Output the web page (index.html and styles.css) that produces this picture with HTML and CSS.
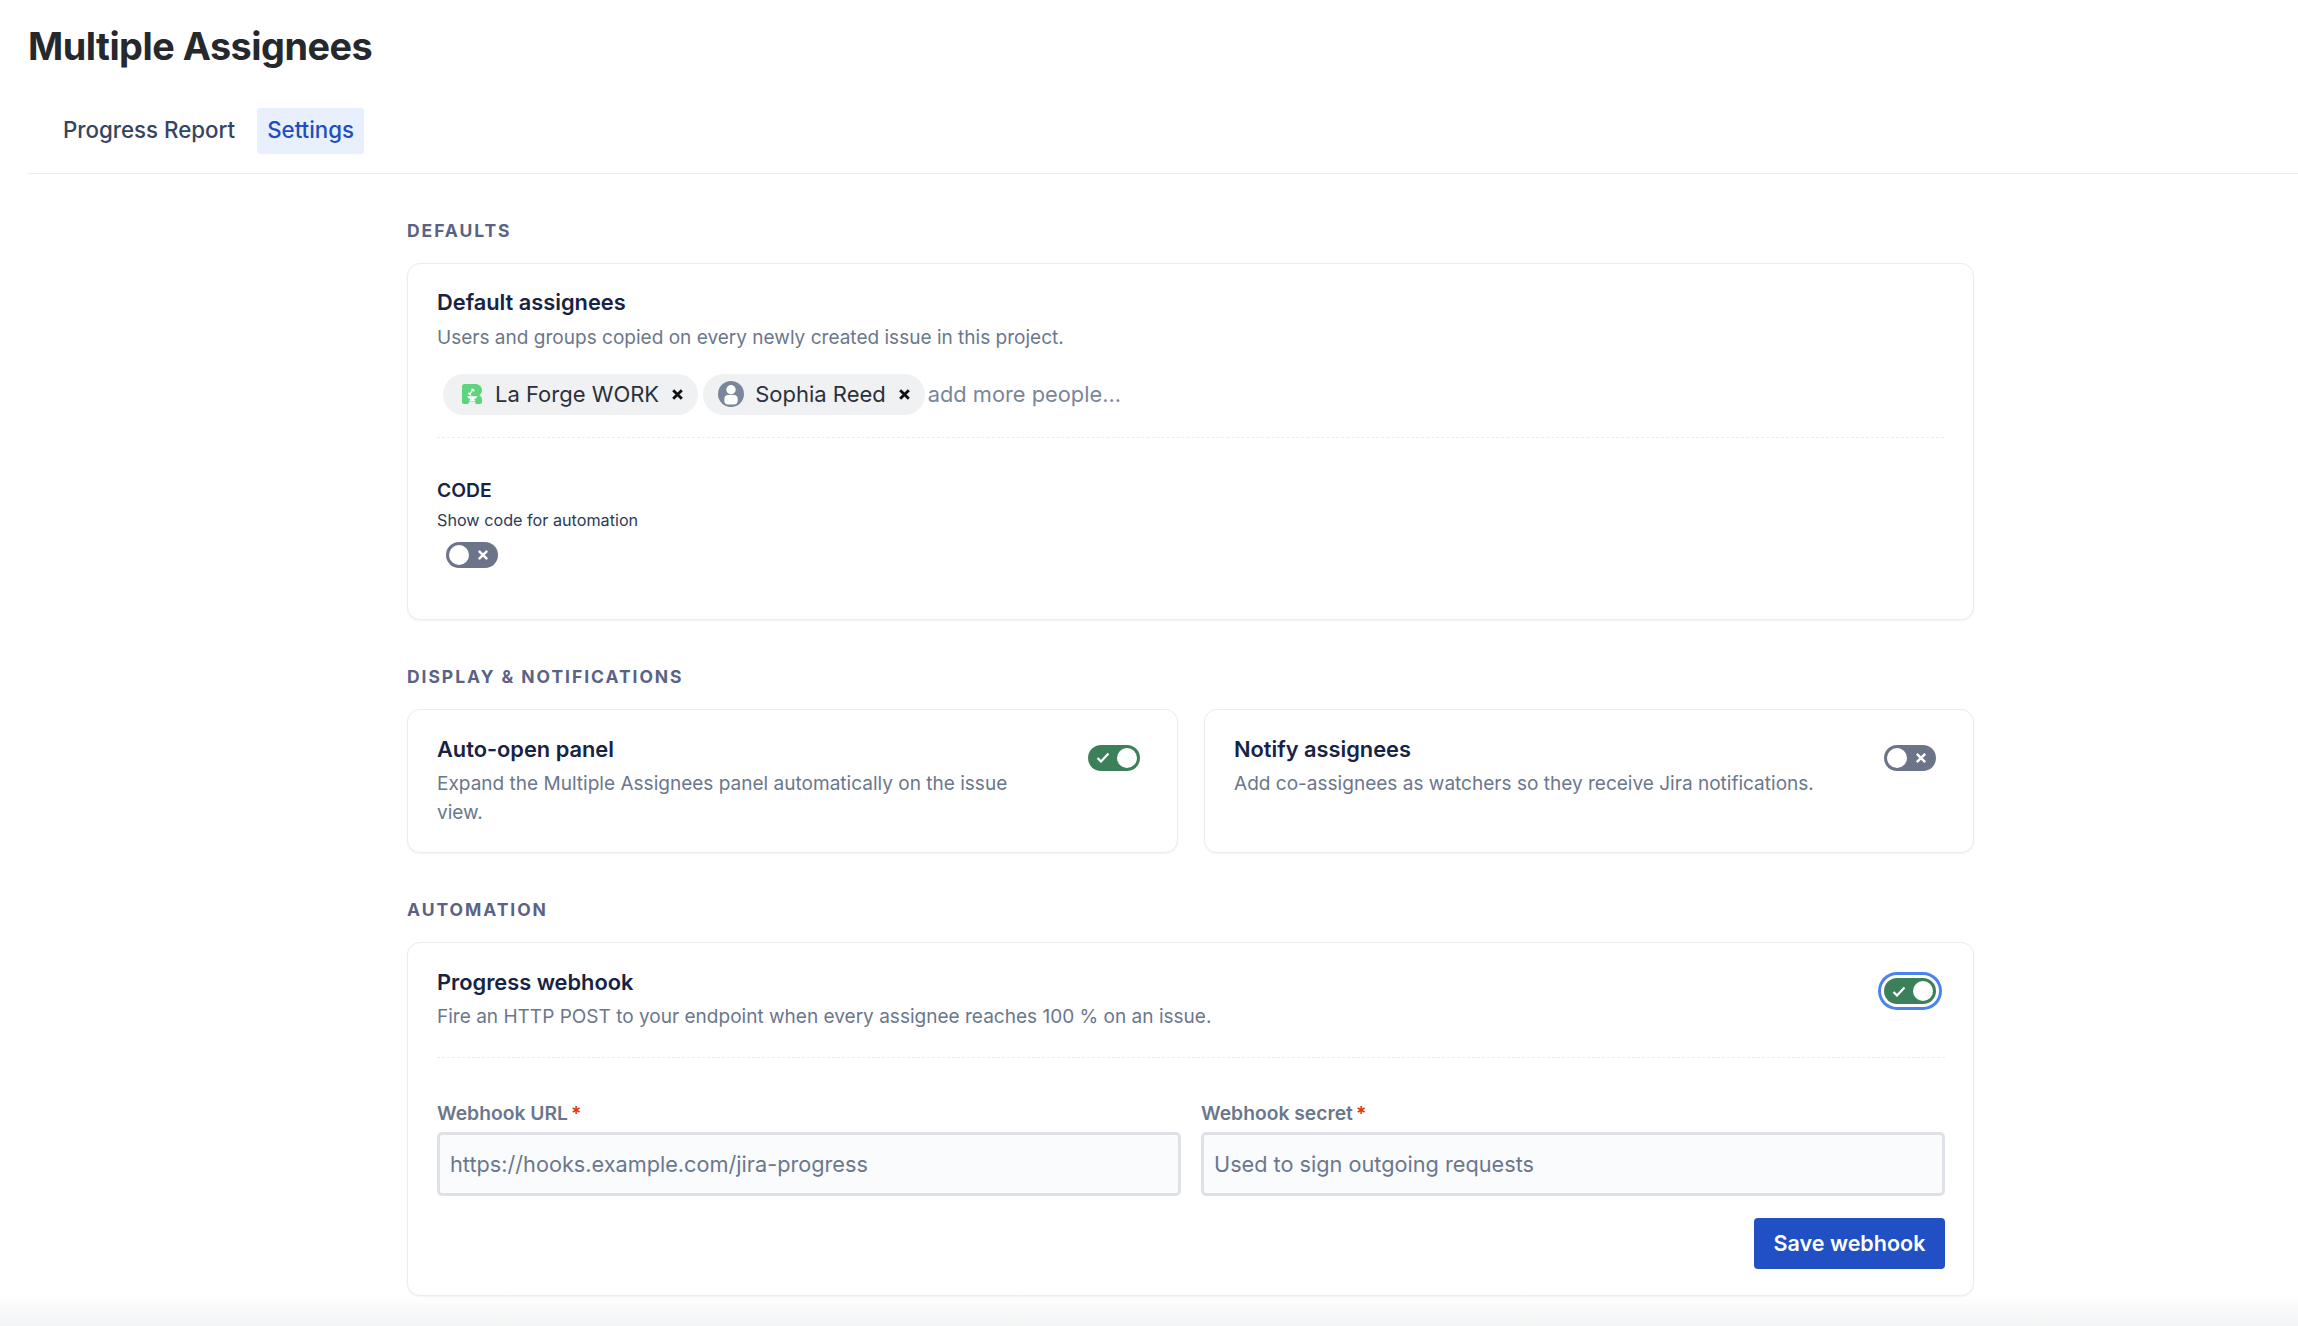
FILE: index.html
```html
<!DOCTYPE html>
<html lang="en">
<head>
<meta charset="utf-8">
<title>Multiple Assignees</title>
<link rel="stylesheet" href="styles.css">
</head>
<body>
<header class="page-head">
  <h1 class="page-title">Multiple Assignees</h1>
  <nav class="tabs">
    <a class="tab">Progress Report</a>
    <a class="tab tab-active">Settings</a>
  </nav>
</header>
<main class="content">
  <section class="section">
    <h2 class="section-label">DEFAULTS</h2>
    <div class="card card-defaults">
      <h3 class="card-title">Default assignees</h3>
      <p class="card-desc">Users and groups copied on every newly created issue in this project.</p>
      <div class="picker">
        <span class="chip chip-group">
          <svg class="chip-logo" viewBox="0 0 20 20"><path fill="#5fd47c" d="M2.500 0H13c4 0 7 2.500 7 6.300 0 2.300-1.100 4-2.700 5 1.700 1 2.700 2.600 2.700 4.500V18a2 2 0 0 1-2 2h-4l-1.500-2.500h-5L6 20H2a2 2 0 0 1-2-2V2.500A2.500 2.500 0 0 1 2.500 0z"/><path fill="#fff" d="M10.300 4.200l2.500 2-1.300 1.500-.8-.6-2.200 2.800 1 .8-1 1.100-2.800-2.300 1-1.100.8.600 2.200-2.800-.7-.6z"/><path fill="#fff" d="M5.200 12.300h10.300c-.5 1.500-1.700 2.500-3.300 2.700l1.200 2.300H7.200L8.400 15c-1.700-.2-2.800-1.200-3.200-2.700z"/></svg>
          La Forge WORK
          <svg class="chip-x" viewBox="0 0 12 12"><path d="M2 2l8 8M10 2l-8 8"/></svg>
        </span>
        <span class="chip chip-user">
          <svg class="chip-avatar" viewBox="0 0 26 26"><circle cx="13" cy="13" r="13" fill="#7a869a"/><circle cx="13" cy="8.800" r="4.700" fill="#fff"/><rect x="6.300" y="14" width="13.400" height="9.600" rx="4" fill="#fff"/></svg>
          Sophia Reed
          <svg class="chip-x" viewBox="0 0 12 12"><path d="M2 2l8 8M10 2l-8 8"/></svg>
        </span>
        <span class="picker-placeholder">add more people...</span>
      </div>
      <hr class="dashed picker-rule">
      <h4 class="field-head">CODE</h4>
      <p class="field-note">Show code for automation</p>
      <span class="toggle toggle-off toggle-block">
        <span class="knob"></span>
        <svg class="toggle-x" viewBox="0 0 10 10"><path d="M1.500 1.500l7 7M8.500 1.500l-7 7"/></svg>
      </span>
    </div>
  </section>

  <section class="section">
    <h2 class="section-label">DISPLAY &amp; NOTIFICATIONS</h2>
    <div class="card-pair">
      <div class="card card-setting">
        <div class="setting-copy">
          <h3 class="card-title">Auto-open panel</h3>
          <p class="card-desc">Expand the Multiple Assignees panel automatically on the issue view.</p>
        </div>
        <span class="toggle toggle-on">
          <svg class="toggle-check" viewBox="0 0 14 11"><path d="M1.500 6l3.500 3.500L12.500 1.500"/></svg>
          <span class="knob"></span>
        </span>
      </div>
      <div class="card card-setting">
        <div class="setting-copy">
          <h3 class="card-title">Notify assignees</h3>
          <p class="card-desc">Add co-assignees as watchers so they receive Jira notifications.</p>
        </div>
        <span class="toggle toggle-off">
          <span class="knob"></span>
          <svg class="toggle-x" viewBox="0 0 10 10"><path d="M1.500 1.500l7 7M8.500 1.500l-7 7"/></svg>
        </span>
      </div>
    </div>
  </section>

  <section class="section">
    <h2 class="section-label">AUTOMATION</h2>
    <div class="card card-webhook">
      <div class="webhook-head">
        <div class="setting-copy">
          <h3 class="card-title">Progress webhook</h3>
          <p class="card-desc">Fire an HTTP POST to your endpoint when every assignee reaches 100 % on an issue.</p>
        </div>
        <span class="toggle toggle-on toggle-focus">
          <svg class="toggle-check" viewBox="0 0 14 11"><path d="M1.500 6l3.500 3.500L12.500 1.500"/></svg>
          <span class="knob"></span>
        </span>
      </div>
      <hr class="dashed webhook-rule">
      <div class="fields">
        <label class="field">
          <span class="field-label">Webhook URL<span class="req">*</span></span>
          <input class="input" type="text" placeholder="https://hooks.example.com/jira-progress">
        </label>
        <label class="field">
          <span class="field-label">Webhook secret<span class="req">*</span></span>
          <input class="input" type="text" placeholder="Used to sign outgoing requests">
        </label>
      </div>
      <div class="actions">
        <button class="btn-primary" type="button">Save webhook</button>
      </div>
    </div>
  </section>
</main>
</body>
</html>
```
FILE: styles.css
```css
* { box-sizing: border-box; }
html, body { margin: 0; height: 100%; }
body {
  font-family: Inter, "Noto Sans", sans-serif;
  background: #fff;
  color: #172b4d;
  overflow: hidden;
  position: relative;
  height: 1326px;
}
body::after {
  content: "";
  position: absolute;
  left: 0; right: 0; bottom: 0;
  height: 32px;
  background: linear-gradient(to bottom, rgba(244,245,246,0), #f3f4f5);
  pointer-events: none;
}
.page-head {
  margin-left: 28px;
  height: 174px;
  padding-top: 24px;
  border-bottom: 1.500px solid #ebecf0;
}
.page-title {
  margin: 0;
  font-size: 37.800px;
  line-height: 44px;
  font-weight: 700;
  color: #25282d;
  letter-spacing: -0.500px;
}
.tabs {
  display: flex;
  gap: 12px;
  margin: 40px 0 0 25px;
}
.tab {
  height: 46px;
  padding: 0 10px 4px;
  display: flex;
  align-items: center;
  font-size: 22.300px;
  font-weight: 500;
  color: #344563;
  border-radius: 3px;
}
.tab-active { background: #e9f0fd; color: #1f4ec0; }

.content { margin-left: 407px; width: 1567px; }
.section-label {
  margin: 0 0 20px;
  font-size: 17.500px;
  line-height: 24px;
  font-weight: 700;
  letter-spacing: 1.950px;
  color: #5a6385;
}
.section:first-child { padding-top: 45px; }
.section + .section { margin-top: 45px; }

.card {
  background: #fff;
  border: 1.500px solid #ebecf0;
  border-radius: 13px;
  box-shadow: 0 1px 2px rgba(9,30,66,.06);
}
.card-title {
  margin: 0;
  font-size: 21.800px;
  line-height: 29px;
  font-weight: 600;
  color: #172344;
}
.card-desc {
  margin: 5px 0 0;
  font-size: 19.050px;
  line-height: 29px;
  color: #6b778c;
}

.card-defaults { height: 357px; padding: 24px 29px 0; }
.card-defaults .card-desc { margin-top: 5.500px; }
.picker { display: flex; align-items: center; gap: 5px; margin: 22px 0 0 6px; }
.chip {
  height: 41px;
  display: inline-flex;
  align-items: center;
  border-radius: 21px;
  background: #f0f1f3;
  font-size: 22px;
  color: #2c3038;
}
.chip-group { padding: 0 14px 0 19px; }
.chip-user { padding: 0 14px 0 15px; }
.chip-logo { width: 20px; height: 20px; margin-right: 13px; }
.chip-avatar { width: 26px; height: 26px; margin-right: 11px; }
.chip-x { width: 13px; height: 13px; margin-left: 12px; }
.chip-x path { stroke: #111; stroke-width: 2.600; fill: none; }
.picker-placeholder { font-size: 21.800px; color: #7a869a; margin-left: -2px; }

.dashed { border: 0; border-top: 1.500px dashed #ebecf0; margin: 0; }
.picker-rule { margin-top: 22px; }
.field-head {
  margin: 40.500px 0 0;
  font-size: 19.300px;
  line-height: 24px;
  font-weight: 600;
  color: #172344;
}
.field-note {
  margin: 6px 0 0;
  font-size: 16.200px;
  line-height: 24px;
  color: #2d3a56;
}

.toggle {
  width: 52px;
  height: 26px;
  border-radius: 13px;
  display: inline-flex;
  align-items: center;
  justify-content: space-between;
  flex: none;
  padding: 0 3px;
}
.toggle-block { display: flex; margin: 9.500px 0 0 9px; }
.toggle-off { background: #6b7489; padding-right: 9px; }
.toggle-on { background: #3c8059; padding-left: 8px; }
.knob { width: 20px; height: 20px; border-radius: 50%; background: #fff; }
.toggle-x { width: 12px; height: 12px; }
.toggle-x path { stroke: #fff; stroke-width: 2; fill: none; }
.toggle-check { width: 14px; height: 11px; }
.toggle-check path { stroke: #fff; stroke-width: 2.200; fill: none; }
.toggle-focus { box-shadow: 0 0 0 3px #fff, 0 0 0 6px #4c82f0; }

.card-pair { display: grid; grid-template-columns: 771px 770px; gap: 26px; }
.card-setting {
  height: 144px;
  padding: 24.500px 37.500px 0 29px;
  display: flex;
  justify-content: space-between;
  align-items: flex-start;
  gap: 50px;
}
.card-setting .toggle { margin-top: 10px; }

.card-webhook { height: 354px; padding: 24.500px 28px 0 29px; }
.webhook-head { display: flex; justify-content: space-between; align-items: flex-start; }
.webhook-head .toggle { margin: 10.500px 9px 0 0; }
.webhook-rule { margin-top: 26px; }
.fields { display: grid; grid-template-columns: 744px 744px; gap: 20px; margin-top: 42px; }
.field { display: flex; flex-direction: column; gap: 6px; }
.field-label { font-size: 19.300px; line-height: 26px; font-weight: 600; color: #6b778c; }
.req { color: #de350b; margin-left: 3px; }
.input {
  height: 64px;
  border: 3px solid #dfe1e6;
  border-radius: 5px;
  background: #fafbfc;
  padding: 0 10px;
  font: 400 21.700px Inter, "Noto Sans", sans-serif;
  outline: none;
}
.input::placeholder { color: #6b778c; opacity: 1; }
.actions { display: flex; justify-content: flex-end; margin-top: 22px; }
.btn-primary {
  width: 191px;
  height: 51px;
  border: 0;
  border-radius: 4px;
  background: #2050c4;
  color: #fff;
  font: 600 21.500px Inter, "Noto Sans", sans-serif;
}
```
